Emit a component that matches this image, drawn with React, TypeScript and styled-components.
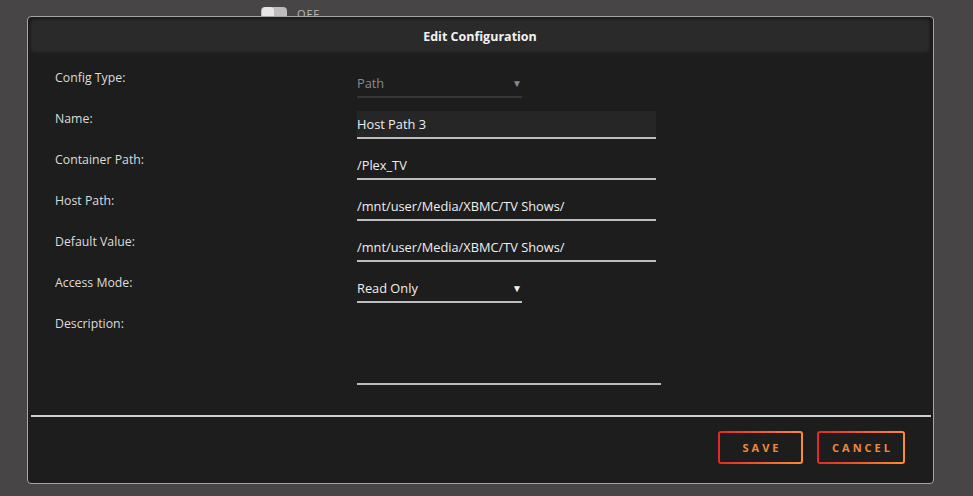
import React from "react";
import styled, { createGlobalStyle } from "styled-components";

const GlobalStyle = createGlobalStyle`
  html, body {
    margin: 0;
    padding: 0;
    background: #474546;
    font-family: "Open Sans", "Noto Sans", sans-serif;
  }
`;

const Page = styled.div`
  height: 496px;
  overflow: hidden;
`;

const SwitchRow = styled.div`
  display: flex;
  align-items: center;
  gap: 10px;
  padding: 7px 0 0 261px;
`;

const Switch = styled.div`
  width: 26px;
  height: 14px;
  border-radius: 4px;
  background: #bdbdbd;
  display: flex;
  padding: 0 1px;
  box-sizing: border-box;
`;

const Knob = styled.span`
  width: 12px;
  height: 14px;
  border-radius: 4px;
  background: #e6e6e6;
`;

const SwitchLabel = styled.span`
  color: #bbb;
  font-size: 11px;
  letter-spacing: 1px;
  line-height: 14px;
`;

const Dialog = styled.div`
  position: fixed;
  left: 27px;
  top: 16px;
  width: 907px;
  height: 468px;
  box-sizing: border-box;
  background: #1d1d1d;
  border: 1px solid #a5a5a5;
  border-radius: 4px;
  display: flex;
  flex-direction: column;
  padding: 2px 3px 0 2px;
`;

const Header = styled.div`
  height: 34px;
  display: flex;
  align-items: center;
  justify-content: center;
  background: #2a2a2a;
  border-radius: 4px;
  box-shadow: inset 0 0 3px rgba(0, 0, 0, 0.5);
  color: #f2f2f2;
  font-size: 12.5px;
  font-weight: 700;
`;

const Form = styled.div`
  display: grid;
  grid-template-columns: 302px 1fr;
  grid-auto-rows: 41px;
  padding: 12px 0 0 25px;
  flex: 1;
`;

const Label = styled.div`
  color: #dcdcdc;
  font-size: 12.3px;
  line-height: 26px;
`;

const Field = styled.div<{ $wide?: boolean; $filled?: boolean; $dim?: boolean }>`
  margin-top: 5px;
  height: 28px;
  width: ${(p) => (p.$wide ? "304px" : "299px")};
  box-sizing: border-box;
  border-bottom: 2px solid ${(p) => (p.$dim ? "#363636" : "#bdbdbd")};
  background: ${(p) => (p.$filled ? "#262626" : "transparent")};
  color: ${(p) => (p.$dim ? "#8a8a8a" : "#efefef")};
  font-size: 12.8px;
  line-height: 26px;
  display: flex;
  align-items: center;
  justify-content: space-between;
`;

const SelectField = styled(Field)`
  width: 165px;
  padding-right: 0;
`;

const Arrow = styled.span<{ $dim?: boolean }>`
  font-size: 10px;
  color: ${(p) => (p.$dim ? "#8a8a8a" : "#f2f2f2")};
`;

const TextArea = styled(Field)`
  height: 69px;
  grid-row: span 2;
`;

const Divider = styled.div`
  height: 2px;
  background: #cfcfcf;
  margin: 0 -1px 0 1px;
`;

const Footer = styled.div`
  display: flex;
  justify-content: flex-end;
  gap: 14px;
  padding: 14px 25px 19px 0;
`;

const Button = styled.button<{ $w: number }>`
  width: ${(p) => p.$w}px;
  height: 33px;
  border: 2px solid transparent;
  border-radius: 3px;
  background: linear-gradient(#1d1d1d, #1d1d1d) padding-box,
    linear-gradient(90deg, #e22828, #ff8c2f) border-box;
  color: #ee8a3c;
  font-family: "Open Sans", "Noto Sans", sans-serif;
  font-size: 11px;
  font-weight: 700;
  letter-spacing: 3px;
  padding: 0 0 0 3px;
  cursor: pointer;
`;

const rows = [
  { label: "Name:", value: "Host Path 3", filled: true },
  { label: "Container Path:", value: "/Plex_TV" },
  { label: "Host Path:", value: "/mnt/user/Media/XBMC/TV Shows/" },
  { label: "Default Value:", value: "/mnt/user/Media/XBMC/TV Shows/" },
];

export default function App() {
  return (
    <Page>
      <GlobalStyle />
      <SwitchRow>
        <Switch>
          <Knob />
        </Switch>
        <SwitchLabel>OFF</SwitchLabel>
      </SwitchRow>
      <Dialog>
        <Header>Edit Configuration</Header>
        <Form>
          <Label>Config Type:</Label>
          <SelectField $dim>
            <span>Path</span>
            <Arrow $dim>▼</Arrow>
          </SelectField>
          {rows.map((r) => (
            <React.Fragment key={r.label}>
              <Label>{r.label}</Label>
              <Field $filled={r.filled}>{r.value}</Field>
            </React.Fragment>
          ))}
          <Label>Access Mode:</Label>
          <SelectField>
            <span>Read Only</span>
            <Arrow>▼</Arrow>
          </SelectField>
          <Label>Description:</Label>
          <TextArea $wide />
        </Form>
        <Divider />
        <Footer>
          <Button $w={85}>SAVE</Button>
          <Button $w={88}>CANCEL</Button>
        </Footer>
      </Dialog>
    </Page>
  );
}
